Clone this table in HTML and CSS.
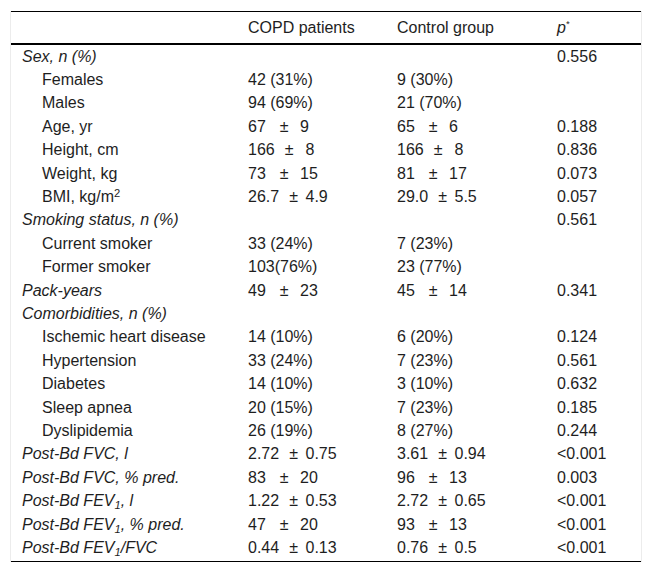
FILE: index.html
```html
<!DOCTYPE html>
<html lang="en">
<head>
<meta charset="utf-8">
<title>Table</title>
<link rel="stylesheet" href="styles.css">
</head>
<body>
<div class="frame">
<table class="data">
  <colgroup>
    <col class="c1"><col class="c2"><col class="c3"><col class="c4">
  </colgroup>
  <thead>
    <tr><th></th><th>COPD patients</th><th>Control group</th><th><i>p</i><sup class="star">*</sup></th></tr>
  </thead>
  <tbody>
    <tr><td class="grp">Sex, n (%)</td><td></td><td></td><td>0.556</td></tr>
    <tr><td class="sub">Females</td><td>42 (31%)</td><td>9 (30%)</td><td></td></tr>
    <tr><td class="sub">Males</td><td>94 (69%)</td><td>21 (70%)</td><td></td></tr>
    <tr><td class="sub">Age, yr</td><td><span class="lead">67<span class="pm">±</span></span>9</td><td><span class="lead">65<span class="pm">±</span></span>6</td><td>0.188</td></tr>
    <tr><td class="sub">Height, cm</td><td><span class="lead wide">166<span class="pm">±</span></span>8</td><td><span class="lead wide">166<span class="pm">±</span></span>8</td><td>0.836</td></tr>
    <tr><td class="sub">Weight, kg</td><td><span class="lead">73<span class="pm">±</span></span>15</td><td><span class="lead">81<span class="pm">±</span></span>17</td><td>0.073</td></tr>
    <tr><td class="sub">BMI, kg/m<sup>2</sup></td><td><span class="lead wide">26.7<span class="pm">±</span></span>4.9</td><td><span class="lead wide">29.0<span class="pm">±</span></span>5.5</td><td>0.057</td></tr>
    <tr><td class="grp">Smoking status, n (%)</td><td></td><td></td><td>0.561</td></tr>
    <tr><td class="sub">Current smoker</td><td>33 (24%)</td><td>7 (23%)</td><td></td></tr>
    <tr><td class="sub">Former smoker</td><td>103(76%)</td><td>23 (77%)</td><td></td></tr>
    <tr><td class="grp">Pack-years</td><td><span class="lead">49<span class="pm">±</span></span>23</td><td><span class="lead">45<span class="pm">±</span></span>14</td><td>0.341</td></tr>
    <tr><td class="grp">Comorbidities, n (%)</td><td></td><td></td><td></td></tr>
    <tr><td class="sub">Ischemic heart disease</td><td>14 (10%)</td><td>6 (20%)</td><td>0.124</td></tr>
    <tr><td class="sub">Hypertension</td><td>33 (24%)</td><td>7 (23%)</td><td>0.561</td></tr>
    <tr><td class="sub">Diabetes</td><td>14 (10%)</td><td>3 (10%)</td><td>0.632</td></tr>
    <tr><td class="sub">Sleep apnea</td><td>20 (15%)</td><td>7 (23%)</td><td>0.185</td></tr>
    <tr><td class="sub">Dyslipidemia</td><td>26 (19%)</td><td>8 (27%)</td><td>0.244</td></tr>
    <tr><td class="grp">Post-Bd FVC, l</td><td><span class="lead wide">2.72<span class="pm">±</span></span>0.75</td><td><span class="lead wide">3.61<span class="pm">±</span></span>0.94</td><td>&lt;0.001</td></tr>
    <tr><td class="grp">Post-Bd FVC, % pred.</td><td><span class="lead">83<span class="pm">±</span></span>20</td><td><span class="lead">96<span class="pm">±</span></span>13</td><td>0.003</td></tr>
    <tr><td class="grp">Post-Bd FEV<sub>1</sub>, l</td><td><span class="lead wide">1.22<span class="pm">±</span></span>0.53</td><td><span class="lead wide">2.72<span class="pm">±</span></span>0.65</td><td>&lt;0.001</td></tr>
    <tr><td class="grp">Post-Bd FEV<sub>1</sub>, % pred.</td><td><span class="lead">47<span class="pm">±</span></span>20</td><td><span class="lead">93<span class="pm">±</span></span>13</td><td>&lt;0.001</td></tr>
    <tr><td class="grp">Post-Bd FEV<sub>1</sub>/FVC</td><td><span class="lead wide">0.44<span class="pm">±</span></span>0.13</td><td><span class="lead wide">0.76<span class="pm">±</span></span>0.5</td><td>&lt;0.001</td></tr>
  </tbody>
</table>
</div>
</body>
</html>
```

FILE: styles.css
```css
html, body {
  margin: 0;
  padding: 0;
  background: #ffffff;
}

body {
  font-family: "Liberation Sans", Arial, sans-serif;
  font-size: 16px;
  color: #1e1e1e;
}

.frame {
  margin: 11px 10px 0 10px;
  width: 630px;
  border-left: 1px solid #ececec;
  border-right: 1px solid #ececec;
}

.data {
  width: 630px;
  border-collapse: collapse;
  table-layout: fixed;
  border-top: 1px solid #000;
  border-bottom: 1px solid #000;
}

.c1 { width: 226px; }
.c2 { width: 149px; }
.c3 { width: 160px; }
.c4 { width: 95px; }

.data th {
  font-weight: normal;
  text-align: left;
  padding: 6px 0 5px 11px;
  line-height: 19.5px;
  border-bottom: 2px solid #000;
}

.data td {
  padding: 2px 0 2px 11px;
  line-height: 19.4px;
  vertical-align: middle;
  white-space: nowrap;
}

.data tbody tr:last-child td {
  padding-bottom: 3.5px;
}

.data td.grp {
  font-style: italic;
}

.data td.sub {
  padding-left: 31px;
}

.lead {
  display: inline-block;
  width: 52px;
}

.lead.wide {
  width: 57.5px;
}

.lead .pm {
  margin-left: 14px;
}

.lead.wide .pm {
  margin-left: 10px;
}

sup {
  font-size: 0.7em;
  line-height: 0;
  vertical-align: 0.45em;
}

sup.star {
  font-size: 0.6em;
  vertical-align: 0.6em;
}

sub {
  font-size: 0.7em;
  line-height: 0;
  vertical-align: -0.3em;
}
```
